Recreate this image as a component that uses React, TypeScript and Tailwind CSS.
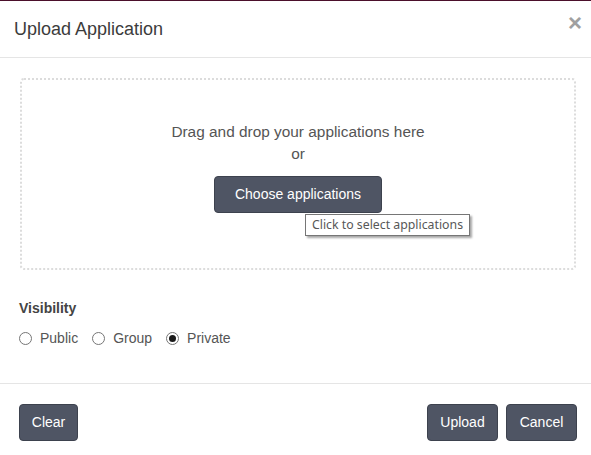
import React from "react";

function Radio({ label, checked }: { label: string; checked?: boolean }) {
  return (
    <label className="flex items-center gap-[8px]">
      <span className="w-[13px] h-[13px] rounded-full border border-[#767676] bg-white flex items-center justify-center">
        {checked && <span className="w-[7px] h-[7px] rounded-full bg-[#1a1a1a]" />}
      </span>
      <span>{label}</span>
    </label>
  );
}

function DarkButton({ children, className = "" }: { children: React.ReactNode; className?: string }) {
  return (
    <button
      className={`h-[37px] rounded-[4px] bg-[#4f5564] border border-[#3d424e] text-white text-[14px] ${className}`}
    >
      {children}
    </button>
  );
}

export default function App() {
  return (
    <div
      className="w-[591px] h-[455px] bg-white text-[#555] text-[14px] overflow-hidden"
      style={{ fontFamily: '"Liberation Sans", Arial, sans-serif' }}
    >
      <div className="h-[1px] bg-[#4b0f2b]" />
      <div className="flex items-center justify-between pl-[14px] pr-[9px] h-[57px] border-b border-[#e5e5e5]">
        <h4 className="text-[18px] leading-[20px] text-[#3c3c3c]">Upload Application</h4>
        <span className="text-[24px] font-bold text-[#a0a0a0] leading-none -mt-[12px]">×</span>
      </div>

      <div className="pl-[20px] pr-[15px] pt-[20px]">
        <div className="h-[192px] border-2 border-dotted border-[#dcdcdc] rounded-[4px] flex flex-col items-center pt-[41px]">
          <p className="leading-[22px] text-[15.4px]">Drag and drop your applications here</p>
          <p className="leading-[22px] text-[15.4px]">or</p>
          <div className="relative mt-[11px]">
            <DarkButton className="w-[168px]">Choose applications</DarkButton>
            <div
              className="absolute left-[91px] top-[38px] whitespace-nowrap bg-white border border-[#767676] px-[6px] h-[22px] leading-[20px] text-[12.3px] text-[#575757] shadow-[2px_2px_2px_rgba(0,0,0,0.35)]"
              style={{ fontFamily: '"Noto Sans", "Noto Sans CJK SC", sans-serif' }}
            >
              Click to select applications
            </div>
          </div>
        </div>

        <div className="mt-[28px] ml-[-1px] font-bold text-[#444] leading-[20px]">Visibility</div>
        <div className="mt-[10px] ml-[-1px] flex items-center gap-[14px] leading-[20px]">
          <Radio label="Public" />
          <Radio label="Group" />
          <Radio label="Private" checked />
        </div>
      </div>

      <div className="mt-[35px] border-t border-[#e5e5e5] flex items-center justify-between pl-[19px] pr-[14px] pt-[20px]">
        <DarkButton className="w-[59px]">Clear</DarkButton>
        <div className="flex gap-[8px]">
          <DarkButton className="w-[71px]">Upload</DarkButton>
          <DarkButton className="w-[71px]">Cancel</DarkButton>
        </div>
      </div>
    </div>
  );
}
